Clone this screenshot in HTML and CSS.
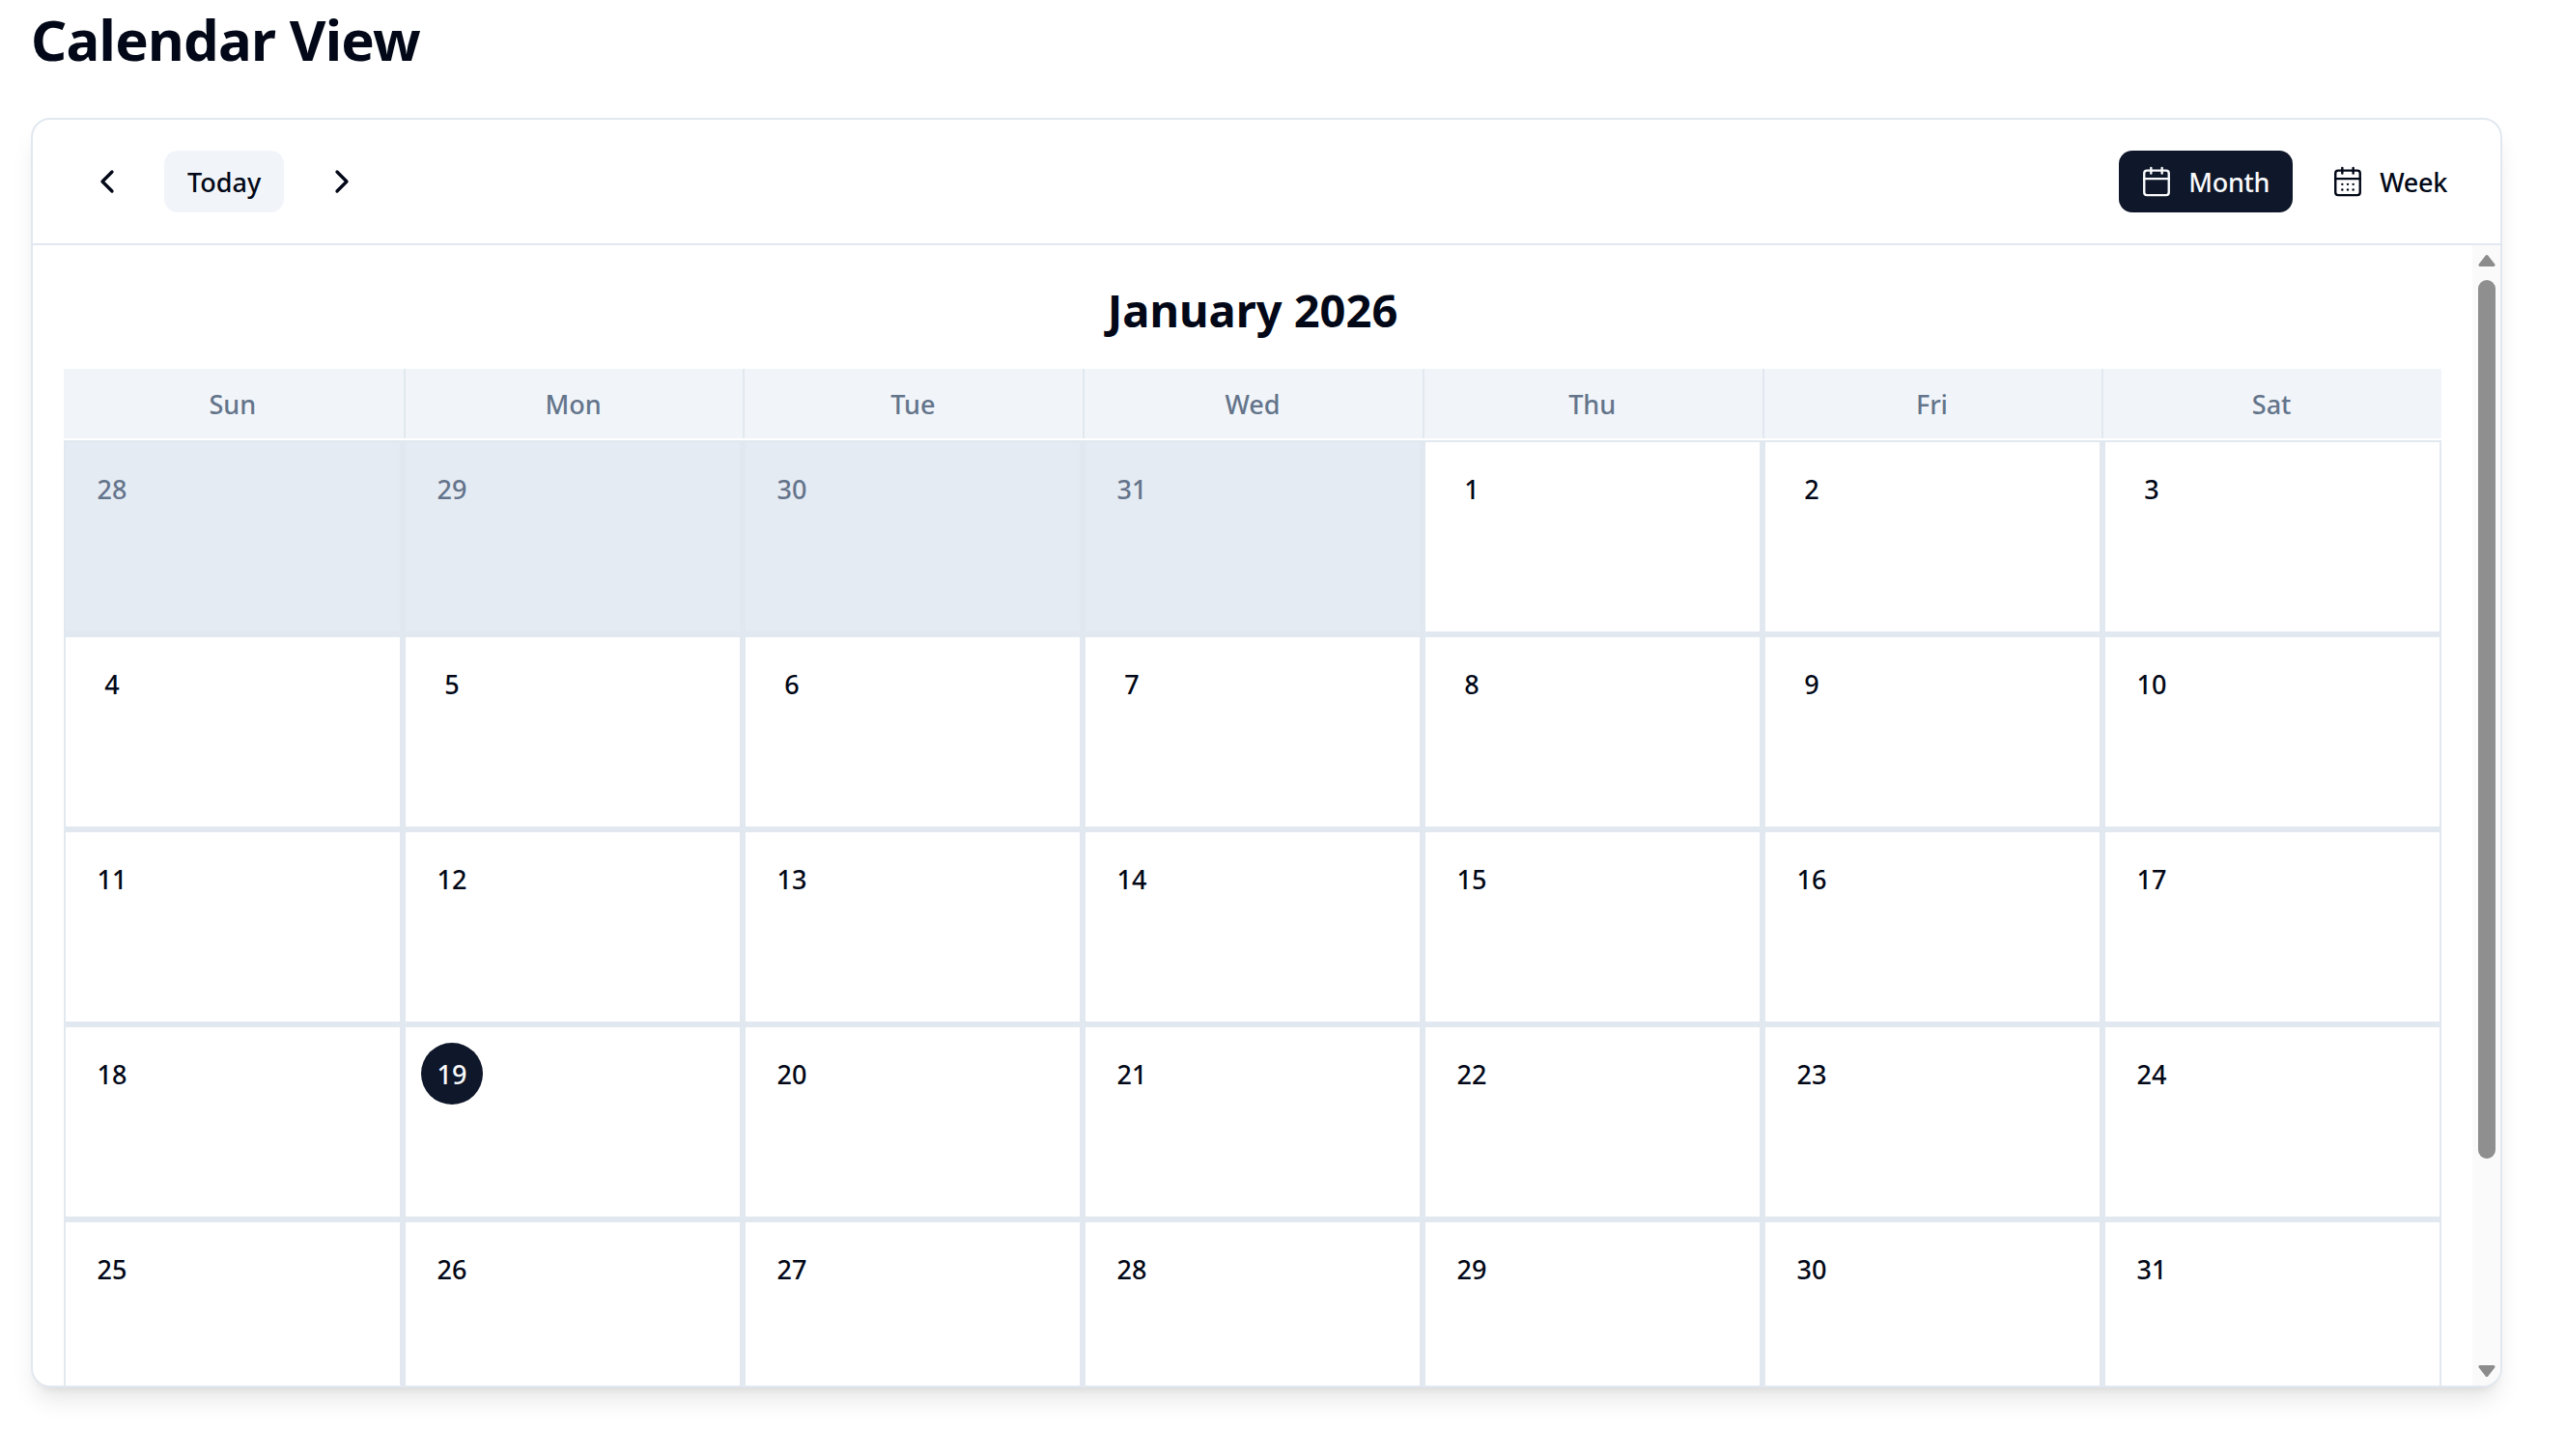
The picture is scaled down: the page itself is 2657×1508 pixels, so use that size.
FILE: index.html
```html
<!DOCTYPE html>
<html lang="en">
<head>
    <meta charset="UTF-8">
    <title>Calendar View</title>
    <link rel="stylesheet" href="styles.css">
</head>
<body>

<h1 class="page-title">Calendar View</h1>

<div class="card">
    <div class="toolbar">
        <div class="nav">
            <button class="icon-btn">
                <svg class="icon chevron" viewBox="0 0 24 24"><path d="m15 18-6-6 6-6"/></svg>
            </button>
            <button class="today-btn">Today</button>
            <button class="icon-btn">
                <svg class="icon chevron" viewBox="0 0 24 24"><path d="m9 18 6-6-6-6"/></svg>
            </button>
        </div>
        <div class="views">
            <button class="view-btn active">
                <svg class="icon" viewBox="0 0 24 24"><path d="M8 2v4"/><path d="M16 2v4"/><rect width="18" height="18" x="3" y="4" rx="2"/><path d="M3 10h18"/></svg>
                Month
            </button>
            <button class="view-btn">
                <svg class="icon" viewBox="0 0 24 24"><path d="M8 2v4"/><path d="M16 2v4"/><rect width="18" height="18" x="3" y="4" rx="2"/><path d="M3 10h18"/><path d="M8 14h.01"/><path d="M12 14h.01"/><path d="M16 14h.01"/><path d="M8 18h.01"/><path d="M12 18h.01"/><path d="M16 18h.01"/></svg>
                Week
            </button>
        </div>
    </div>

    <div class="body">
        <div class="scroll-area">
            <h2 class="month-title">January 2026</h2>

            <div class="weekdays">
                <div>Sun</div>
                <div>Mon</div>
                <div>Tue</div>
                <div>Wed</div>
                <div>Thu</div>
                <div>Fri</div>
                <div>Sat</div>
            </div>

            <div class="days">
                <div class="day other"><span class="num">28</span></div>
                <div class="day other"><span class="num">29</span></div>
                <div class="day other"><span class="num">30</span></div>
                <div class="day other"><span class="num">31</span></div>
                <div class="day"><span class="num">1</span></div>
                <div class="day"><span class="num">2</span></div>
                <div class="day"><span class="num">3</span></div>

                <div class="day"><span class="num">4</span></div>
                <div class="day"><span class="num">5</span></div>
                <div class="day"><span class="num">6</span></div>
                <div class="day"><span class="num">7</span></div>
                <div class="day"><span class="num">8</span></div>
                <div class="day"><span class="num">9</span></div>
                <div class="day"><span class="num">10</span></div>

                <div class="day"><span class="num">11</span></div>
                <div class="day"><span class="num">12</span></div>
                <div class="day"><span class="num">13</span></div>
                <div class="day"><span class="num">14</span></div>
                <div class="day"><span class="num">15</span></div>
                <div class="day"><span class="num">16</span></div>
                <div class="day"><span class="num">17</span></div>

                <div class="day"><span class="num">18</span></div>
                <div class="day"><span class="num today">19</span></div>
                <div class="day"><span class="num">20</span></div>
                <div class="day"><span class="num">21</span></div>
                <div class="day"><span class="num">22</span></div>
                <div class="day"><span class="num">23</span></div>
                <div class="day"><span class="num">24</span></div>

                <div class="day"><span class="num">25</span></div>
                <div class="day"><span class="num">26</span></div>
                <div class="day"><span class="num">27</span></div>
                <div class="day"><span class="num">28</span></div>
                <div class="day"><span class="num">29</span></div>
                <div class="day"><span class="num">30</span></div>
                <div class="day"><span class="num">31</span></div>
            </div>
        </div>

        <div class="scrollbar">
            <svg class="arrow" viewBox="0 0 18 14"><path d="M9 2.500 16 11.500H2Z"/></svg>
            <div class="thumb"></div>
            <svg class="arrow" viewBox="0 0 18 14"><path d="M2 2.500H16L9 11.500Z"/></svg>
        </div>
    </div>
</div>

</body>
</html>
```

FILE: styles.css
```css
body {
    margin: 0;
    height: 1508px;
    overflow: hidden;
    background-color: #fff;
    color: #020817;
    font-family: "Noto Sans", sans-serif;
    font-size: 27px;
    font-weight: 500;
}

.page-title {
    margin: 0 0 47px 32px;
    padding-top: 7px;
    font-size: 58px;
    line-height: 68px;
    font-weight: 700;
    letter-spacing: -0.7px;
}

/* Card */
.card {
    margin-left: 32px;
    width: 2559px;
    height: 1315px;
    box-sizing: border-box;
    display: flex;
    flex-direction: column;
    background: #fff;
    border: 2px solid #e2e8f0;
    border-radius: 20px;
    overflow: hidden;
    box-shadow: 0 17px 25px -5px rgba(0, 0, 0, 0.1), 0 7px 10px -7px rgba(0, 0, 0, 0.1);
}

/* Toolbar */
.toolbar {
    display: flex;
    justify-content: space-between;
    align-items: center;
    flex-shrink: 0;
    height: 128px;
    padding: 0 31px 0 34px;
    border-bottom: 2px solid #e2e8f0;
}

.nav,
.views {
    display: flex;
    align-items: center;
}

.nav {
    gap: 17px;
}

.views {
    gap: 18px;
}

button {
    display: flex;
    align-items: center;
    height: 64px;
    border: none;
    border-radius: 14px;
    background: none;
    color: #020817;
    font-family: inherit;
    font-size: 27px;
    font-weight: 500;
    cursor: pointer;
}

.icon {
    width: 34px;
    height: 34px;
    flex-shrink: 0;
    fill: none;
    stroke: currentColor;
    stroke-width: 1.7;
    stroke-linecap: round;
    stroke-linejoin: round;
}

.icon.chevron {
    width: 40px;
    height: 40px;
    stroke-width: 2;
}

.icon-btn {
    justify-content: center;
    width: 85px;
    padding: 0;
}

.today-btn {
    padding: 0 24px;
    background-color: #f1f5f9;
}

.view-btn {
    gap: 16px;
    padding: 0 24px 0 22px;
    letter-spacing: -0.3px;
}

.view-btn.active {
    background-color: #0f172a;
    color: #f8fafc;
}

/* Calendar body */
.body {
    display: flex;
    flex: 1;
    min-height: 0;
}

.scroll-area {
    flex: 1;
    min-width: 0;
    padding: 0 32px;
    overflow: hidden;
}

.month-title {
    margin: 0;
    padding-top: 35px;
    height: 93px;
    font-size: 47px;
    line-height: 64px;
    font-weight: 700;
    text-align: center;
}

.weekdays {
    display: grid;
    grid-template-columns: repeat(7, 1fr);
    height: 72px;
    margin-bottom: 2px;
    background-color: #f1f5f9;
    color: #64748b;
}

.weekdays div {
    display: flex;
    justify-content: center;
    align-items: center;
    padding-right: 2px;
}

.weekdays div + div {
    border-left: 2px solid #e2e8f0;
}

.days {
    display: grid;
    grid-template-columns: repeat(7, 1fr);
    grid-auto-rows: 196px;
    gap: 6px;
    padding: 2px 2px 0;
    background-color: #e2e8f0;
}

.day {
    padding: 16px;
    background-color: #fff;
}

.day.other {
    background-color: #e5ebf3;
    color: #64748b;
}

.num {
    display: flex;
    justify-content: center;
    align-items: center;
    width: 64px;
    height: 64px;
    border-radius: 50%;
}

.num.today {
    background-color: #0f172a;
    color: #f8fafc;
}

/* Scrollbar */
.scrollbar {
    display: flex;
    flex-direction: column;
    align-items: center;
    flex-shrink: 0;
    width: 29px;
    padding: 9px 0 8px;
    box-sizing: border-box;
    background-color: #fafafa;
}

.arrow {
    width: 18px;
    height: 14px;
    fill: #8c8c8c;
    stroke: #8c8c8c;
    stroke-width: 3;
    stroke-linejoin: round;
}

.thumb {
    width: 18px;
    height: 910px;
    margin: 13px 0 auto;
    border-radius: 9px;
    background-color: #8f8f8f;
}
```
